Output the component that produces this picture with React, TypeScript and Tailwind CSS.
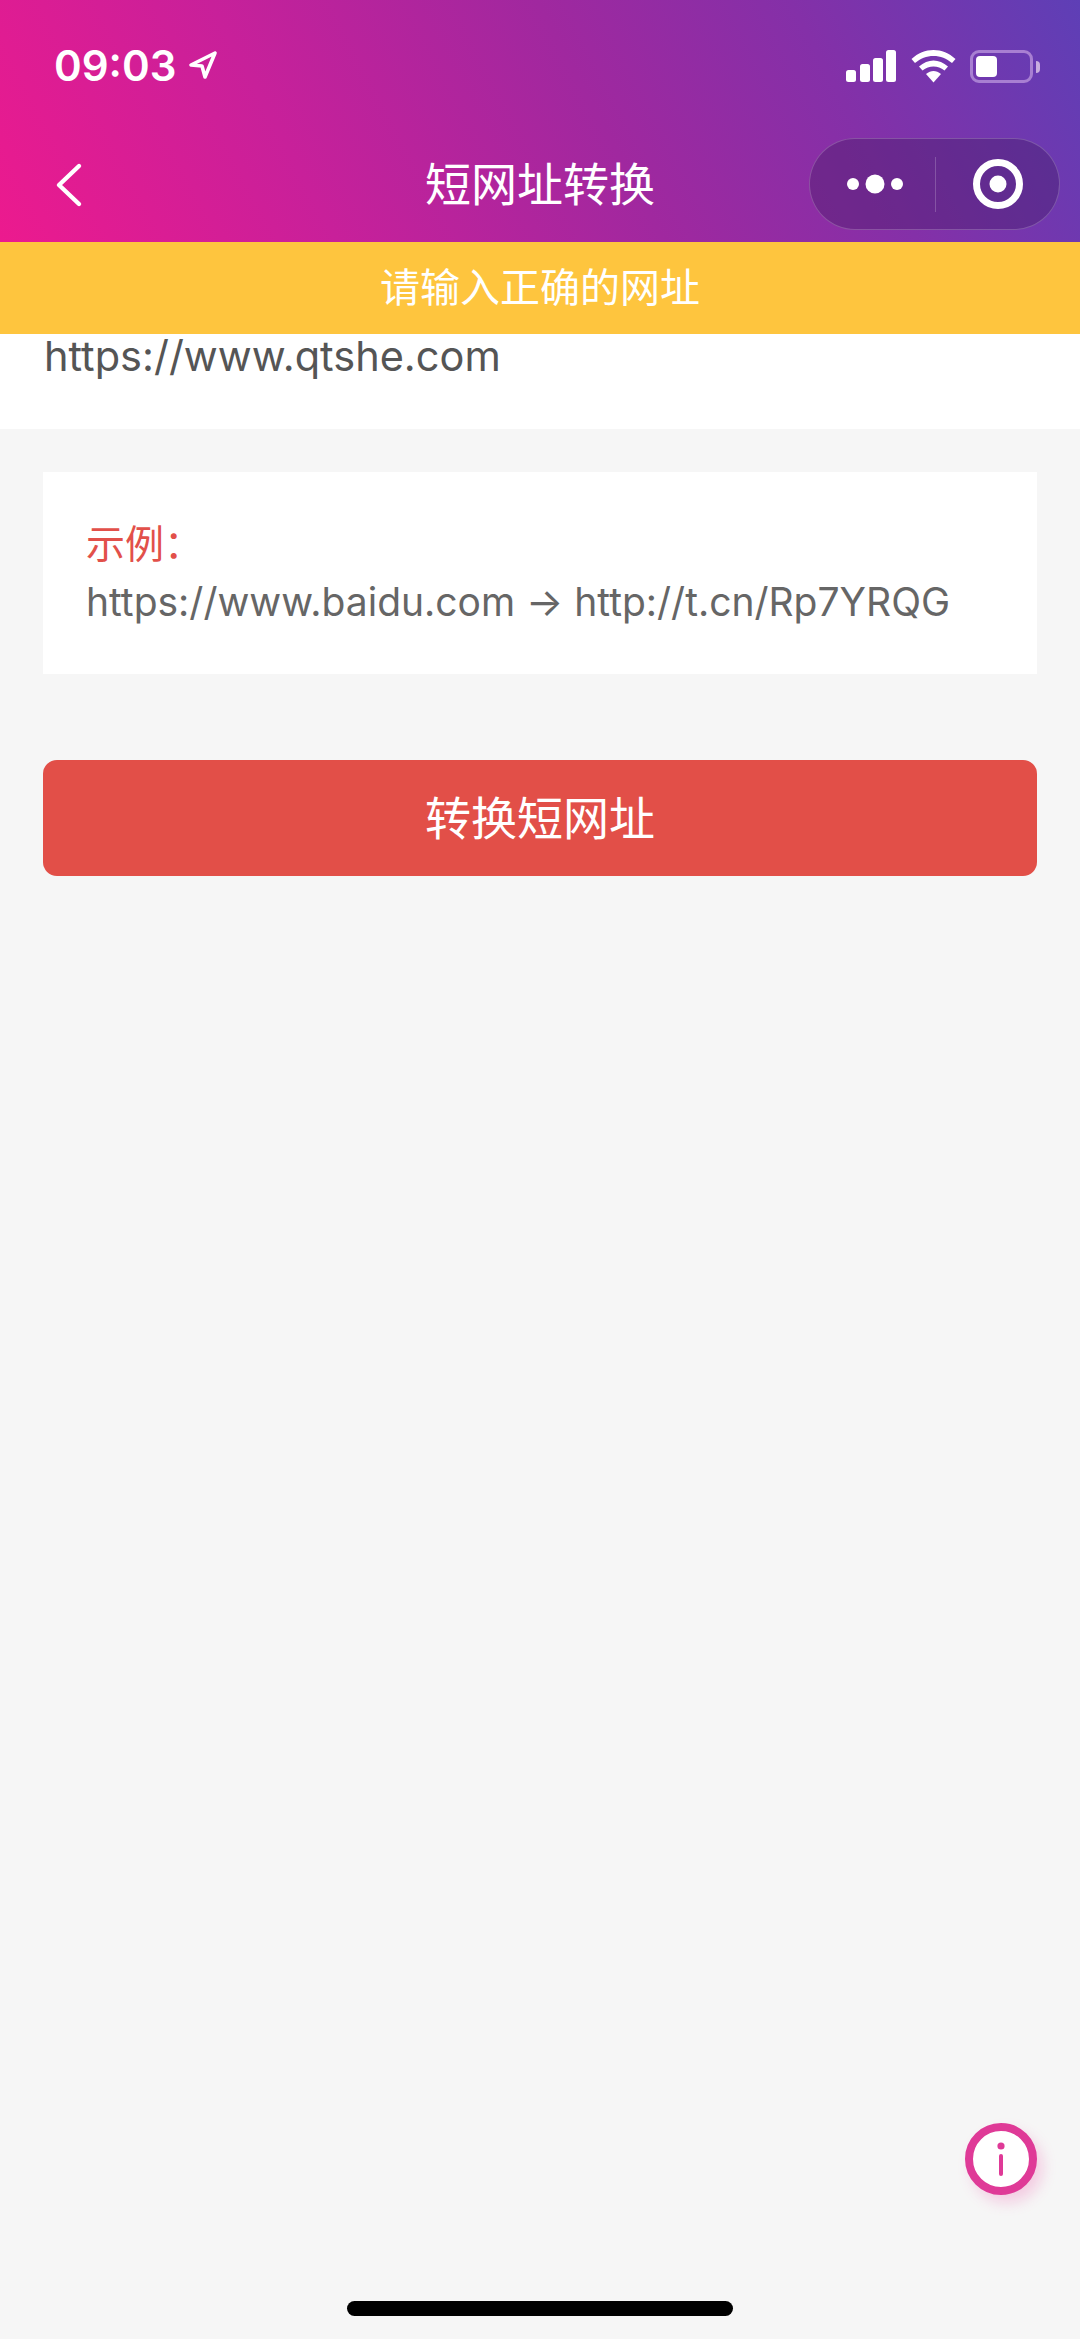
const cjk = "font-['Inter','Noto_Sans_CJK_SC',sans-serif]";

function StatusBar() {
  return (
    <div className="flex h-[138px] items-start justify-between pl-[54px] pr-[40px] pt-[44px] text-white">
      <div className="flex items-center gap-[12px]">
        <span className="font-['Inter',sans-serif] text-[42px] font-semibold leading-[44px]">09:03</span>
        <svg className="mt-[-2px]" width="30" height="30" viewBox="0 0 30 30" fill="none">
          <path d="M27 3 L3 15 L14 16 L17 27 Z" stroke="white" strokeWidth="3.600" strokeLinejoin="round" />
        </svg>
      </div>
      <div className="mt-[6px] flex items-start">
        <svg width="52" height="32" viewBox="0 0 52 32" fill="white">
          <rect x="0" y="20" width="10" height="12" rx="2.500" />
          <rect x="14" y="14" width="10" height="18" rx="2.500" />
          <rect x="27" y="8" width="10" height="24" rx="2.500" />
          <rect x="40" y="0" width="10" height="32" rx="2.500" />
        </svg>
        <svg className="ml-[13px]" width="45" height="33" viewBox="0 0 45 33" fill="white">
          <path d="M22.500 0 C30.500 0 38 3 44.500 9 L41 13 C35.500 8.500 29.500 6 22.500 6 C15.500 6 9.500 8.500 4 13 L0.500 9 C7 3 14.500 0 22.500 0 Z" />
          <path d="M22.500 10.500 C27.500 10.500 32.500 12.500 37 16.500 L33.500 20.500 C30 17.800 26.500 16.500 22.500 16.500 C18.500 16.500 15 17.800 11.500 20.500 L8 16.500 C12.500 12.500 17.500 10.500 22.500 10.500 Z" />
          <path d="M22.500 21 C25 21 27.500 22 30 24 L22.500 32.500 L15 24 C17.500 22 20 21 22.500 21 Z" />
        </svg>
        <div className="ml-[14px] flex items-center">
          <div className="flex h-[33px] w-[63px] items-center rounded-[9px] border-[3px] border-[#a87fd2] pl-[3px]">
            <div className="h-[21px] w-[21px] rounded-[4px] bg-white" />
          </div>
          <div className="ml-[3px] h-[12px] w-[4px] rounded-r-[4px] bg-[#c9addf]" />
        </div>
      </div>
    </div>
  );
}

function NavBar() {
  return (
    <div className="relative flex h-[104px] items-start justify-between pl-[55px] pr-[20px]">
      <svg className="mt-[24px]" width="28" height="46" viewBox="0 0 28 46" fill="none">
        <path d="M24 4 L4 23 L24 42" stroke="white" strokeWidth="4.400" strokeLinecap="round" strokeLinejoin="round" />
      </svg>
      <div className={`${cjk} absolute left-0 right-0 top-[19px] text-center text-[46px] leading-[54px] text-white`}>
        短网址转换
      </div>
      <div className="flex h-[92px] w-[251px] items-center rounded-full border border-white/20 bg-[#3c1a5c]/35">
        <div className="flex w-[125px] justify-center pl-[5px]">
          <svg width="60" height="20" viewBox="0 0 60 20" fill="white">
            <circle cx="8" cy="10" r="6" />
            <circle cx="30" cy="10" r="9.500" />
            <circle cx="52" cy="10" r="6" />
          </svg>
        </div>
        <div className="h-[55px] w-px bg-white/20" />
        <div className="flex flex-1 justify-center">
          <svg width="52" height="52" viewBox="0 0 52 52" fill="none">
            <circle cx="26" cy="26" r="21.500" stroke="white" strokeWidth="7" />
            <circle cx="26" cy="26" r="8.500" fill="white" />
          </svg>
        </div>
      </div>
    </div>
  );
}

export default function App() {
  return (
    <div className="relative h-[2339px] w-[1080px] overflow-hidden bg-[#f6f6f6]">
      <header className="h-[242px] bg-[linear-gradient(62deg,#ec1a8e_0%,#c8209a_28%,#a0289f_55%,#8430a8_76%,#5e3fb6_100%)]">
        <StatusBar />
        <NavBar />
      </header>

      <div className={`${cjk} flex h-[92px] items-center justify-center bg-[#fec53e] text-[40px] text-white`}>
        请输入正确的网址
      </div>

      <div className="h-[95px] bg-white pl-[44px]">
        <p className="font-['Inter',sans-serif] text-[41.500px] leading-[44px] text-[#555555]">https://www.qtshe.com</p>
      </div>

      <section className="mx-[43px] mt-[43px] h-[202px] bg-white pl-[43px] pt-[44px]">
        <p className={`${cjk} text-[39px] leading-[56px] text-[#e2504a]`}>示例：</p>
        <p className={`${cjk} mt-px text-[39px] leading-[58px] text-[#666666]`}>https://www.baidu.com → http://t.cn/Rp7YRQG</p>
      </section>

      <button className={`${cjk} mx-[43px] mt-[86px] flex h-[116px] w-[994px] items-center justify-center rounded-[14px] bg-[#e24f48] text-[46px] text-white`}>
        转换短网址
      </button>

      {/* floating info button */}
      <div className="absolute left-[965px] top-[2123px] flex h-[72px] w-[72px] items-center justify-center rounded-full border-[8px] border-[#df3a97] bg-white shadow-[6px_8px_14px_rgba(236,64,160,0.22)]">
        <svg width="10" height="34" viewBox="0 0 10 34" fill="#df3a97">
          <circle cx="5" cy="4" r="3.600" />
          <rect x="3" y="12" width="4" height="22" rx="2" />
        </svg>
      </div>

      {/* home indicator */}
      <div className="absolute left-[347px] top-[2301px] h-[15px] w-[386px] rounded-full bg-black" />
    </div>
  );
}
